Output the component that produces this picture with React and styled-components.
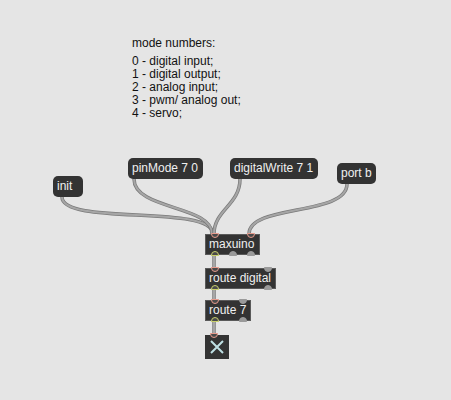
import React from 'react'
import styled, { createGlobalStyle } from 'styled-components'

const GlobalStyle = createGlobalStyle`
    html, body {
        margin: 0;
        padding: 0;
        background: #e5e5e5;
    }
`;

const messages = [
    { label: 'init', x: 53, y: 176, w: 30 },
    { label: 'pinMode 7 0', x: 128, y: 158, w: 75 },
    { label: 'digitalWrite 7 1', x: 230, y: 158, w: 88 },
    { label: 'port b', x: 337, y: 163, w: 39 },
];

const objects = [
    { label: 'maxuino', x: 205, y: 234, w: 55, inlets: [{ at: 9, on: true }, { at: 45, on: true }], outlets: [{ at: 9, on: true }, { at: 27 }, { at: 45 }] },
    { label: 'route digital', x: 205, y: 268, w: 71, inlets: [{ at: 9, on: true }, { at: 62 }], outlets: [{ at: 9, on: true }, { at: 62 }] },
    { label: 'route 7', x: 205, y: 300, w: 46, inlets: [{ at: 9, on: true }, { at: 37 }], outlets: [{ at: 9, on: true }, { at: 37 }] },
];

// patch cords, drawn from outlet to inlet
const cords = [
    'M 62 197 C 62 226, 213 204, 213 234',
    'M 134 179 C 134 210, 212 205, 212 234',
    'M 240 179 C 240 205, 214 210, 214 234',
    'M 347 184 C 347 216, 249 204, 249 234',
    'M 214 255 L 214 268',
    'M 214 289 L 214 300',
    'M 214 321 L 214 335',
];

const modes = [
    '0 - digital input;',
    '1 - digital output;',
    '2 - analog input;',
    '3 - pwm/ analog out;',
    '4 - servo;',
];

const App = () => {
    return (
        <>
            <GlobalStyle />
            <Patcher>
                <Comment>
                    <CommentTitle>mode numbers:</CommentTitle>
                    {modes.map(m => <CommentLine key={m}>{m}</CommentLine>)}
                </Comment>

                <Cords width="451" height="400">
                    {cords.map(d => (
                        <g key={d}>
                            <path d={d} stroke="#7a7a7a" strokeWidth="3.5" fill="none" />
                            <path d={d} stroke="#a6a6a6" strokeWidth="2" fill="none" />
                        </g>
                    ))}
                </Cords>

                {messages.map(m => (
                    <Message key={m.label} $x={m.x} $y={m.y} $w={m.w}>{m.label}</Message>
                ))}

                {objects.map(o => (
                    <ObjectBox key={o.label} $x={o.x} $y={o.y} $w={o.w}>
                        {o.label}
                        {o.inlets.map(p => <Port key={'i' + p.at} $at={p.at} $top $on={p.on} />)}
                        {o.outlets.map(p => <Port key={'o' + p.at} $at={p.at} $on={p.on} />)}
                    </ObjectBox>
                ))}

                <Toggle $x={205} $y={335}>
                    <Port $at={9} $top $on />
                    <svg width="24" height="24" viewBox="0 0 24 24">
                        <path d="M 6 6 L 18 18 M 18 6 L 6 18" stroke="#bfe0e4" strokeWidth="2" fill="none" />
                    </svg>
                </Toggle>
            </Patcher>
        </>
    )
}

export default App

const Patcher = styled.div`
    position: relative;
    width: 451px;
    height: 400px;
    overflow: hidden;
    background: #e5e5e5;
    font-family: "Liberation Sans", Arial, sans-serif;
`;

const Comment = styled.div`
    position: absolute;
    left: 132px;
    top: 37px;
    display: flex;
    flex-direction: column;
    font-size: 12px;
    color: #111;
    line-height: 13px;
`;

const CommentTitle = styled.div`
    margin-bottom: 5px;
`;

const CommentLine = styled.div``;

const Cords = styled.svg`
    position: absolute;
    left: 0;
    top: 0;
`;

const Message = styled.div`
    position: absolute;
    left: ${p => p.$x}px;
    top: ${p => p.$y}px;
    width: ${p => p.$w}px;
    height: 21px;
    box-sizing: border-box;
    padding: 0 4px;
    background: #333333;
    border-radius: 5px;
    color: #f0f0f0;
    font-size: 12px;
    line-height: 21px;
    white-space: nowrap;
`;

const ObjectBox = styled.div`
    position: absolute;
    left: ${p => p.$x}px;
    top: ${p => p.$y}px;
    width: ${p => p.$w}px;
    height: 21px;
    box-sizing: border-box;
    padding: 0 3px;
    background: #333333;
    border: 1px solid #5a5a5a;
    color: #f0f0f0;
    font-size: 12px;
    line-height: 19px;
    white-space: nowrap;
`;

const Port = styled.span`
    position: absolute;
    left: ${p => p.$at - 4}px;
    ${p => p.$top ? 'top: -2px;' : 'bottom: -2px;'}
    width: 8px;
    height: 5px;
    box-sizing: border-box;
    border-radius: ${p => p.$top ? '0 0 4px 4px' : '4px 4px 0 0'};
    background: ${p => p.$on ? '#4a4a4a' : '#9a9a9a'};
    border: 1px solid ${p => !p.$on ? '#9a9a9a' : p.$top ? '#e79a8c' : '#c9d06a'};
`;

const Toggle = styled.div`
    position: absolute;
    left: ${p => p.$x}px;
    top: ${p => p.$y}px;
    width: 24px;
    height: 24px;
    background: #333333;
    svg { display: block; }
`;
